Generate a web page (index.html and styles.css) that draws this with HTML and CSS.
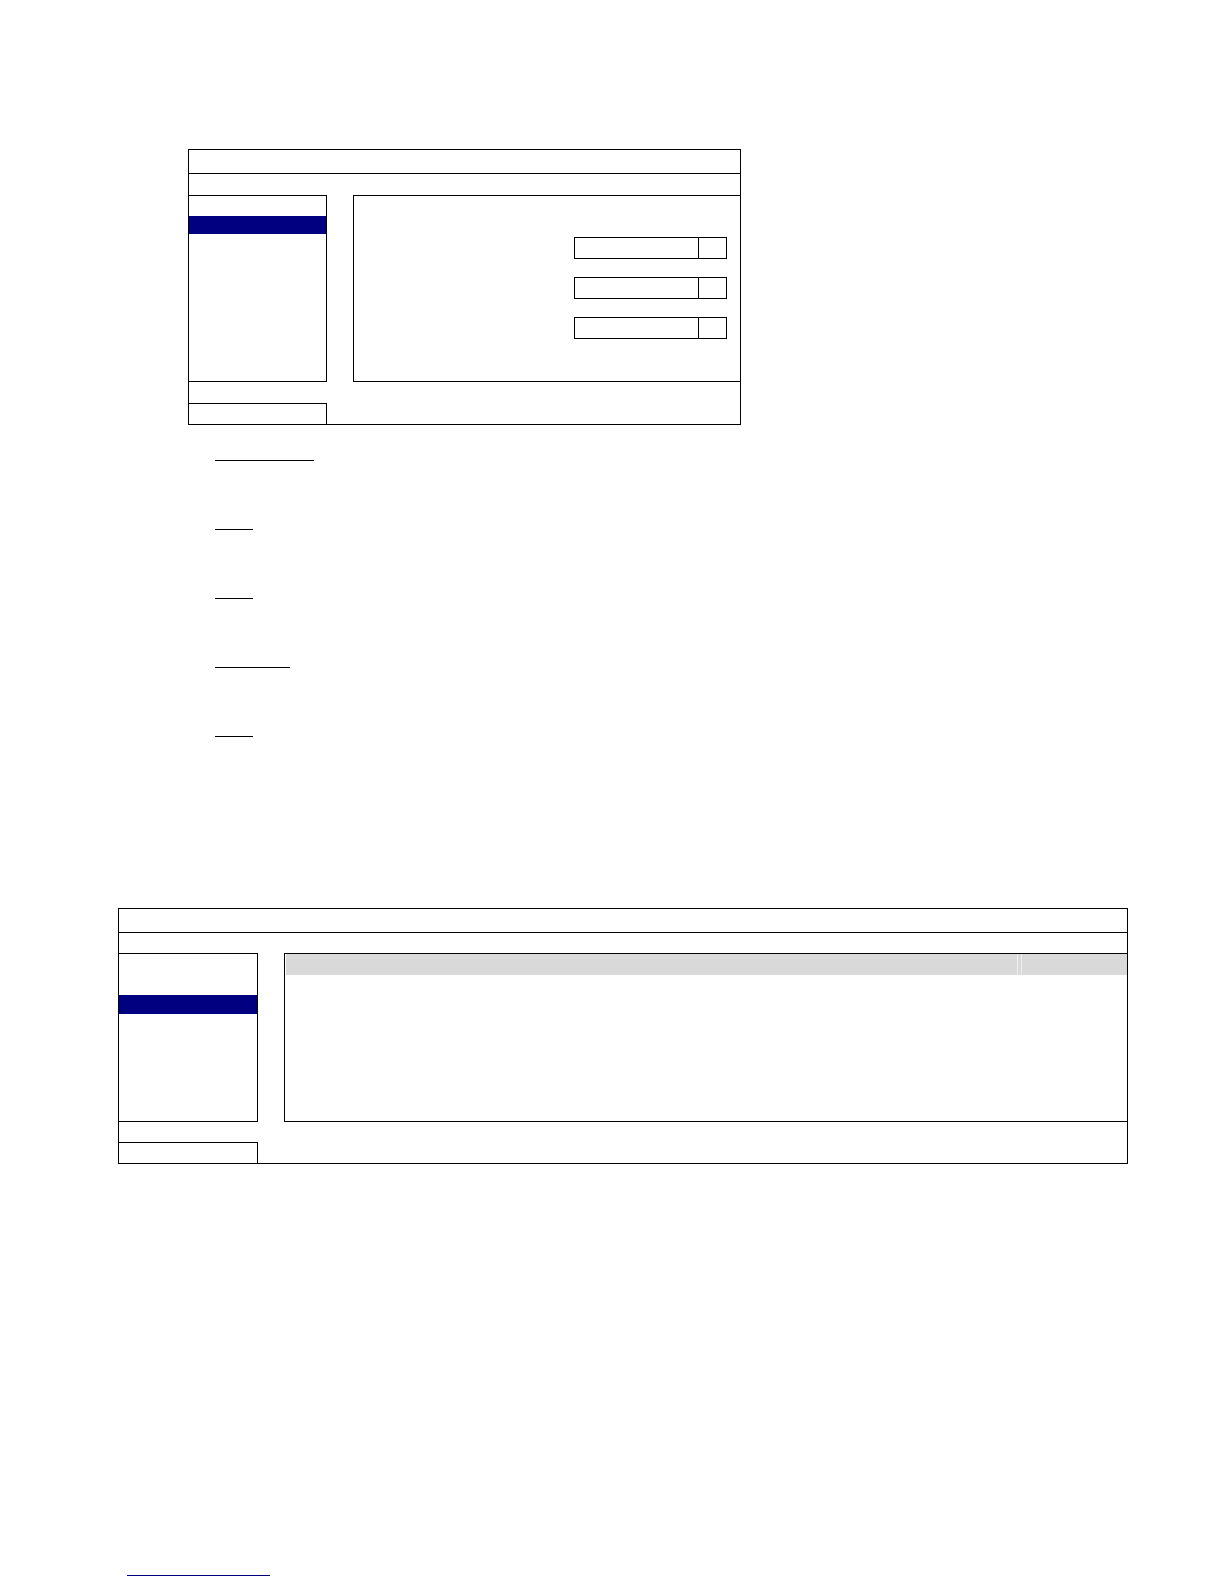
FILE: index.html
```html
<!DOCTYPE html>
<html lang="en">
<head>
<meta charset="utf-8">
<title>Manual page</title>
<link rel="stylesheet" href="styles.css">
</head>
<body>
<main class="page">
  <section class="osd osd-1">
    <div class="osd-title"></div>
    <div class="osd-sub"></div>
    <div class="osd-body">
      <div class="menu menu-1">
        <div class="menu-item"></div>
        <div class="menu-item is-active"></div>
      </div>
      <div class="panel panel-form">
        <div class="select"><div class="select-value"></div><div class="select-btn"></div></div>
        <div class="select"><div class="select-value"></div><div class="select-btn"></div></div>
        <div class="select"><div class="select-value"></div><div class="select-btn"></div></div>
      </div>
    </div>
    <div class="osd-gap"></div>
    <div class="osd-foot"><div class="foot-cell"></div></div>
  </section>

  <ul class="headings">
    <li class="heading heading-lg"></li>
    <li class="heading heading-sm"></li>
    <li class="heading heading-sm"></li>
    <li class="heading heading-md"></li>
    <li class="heading heading-sm"></li>
  </ul>

  <section class="osd osd-2">
    <div class="osd-title"></div>
    <div class="osd-sub"></div>
    <div class="osd-body">
      <div class="menu menu-2">
        <div class="menu-item"></div>
        <div class="menu-item"></div>
        <div class="menu-item is-active"></div>
      </div>
      <div class="panel panel-list">
        <div class="grid-head">
          <div class="col-main"></div>
          <div class="col-sep"></div>
          <div class="col-end"></div>
        </div>
      </div>
    </div>
    <div class="osd-gap"></div>
    <div class="osd-foot"><div class="foot-cell"></div></div>
  </section>

  <div class="footnote-rule"></div>
</main>
</body>
</html>
```

FILE: styles.css
```css
* { box-sizing: border-box; }
html, body { margin: 0; padding: 0; background: #fff; }
body { font-family: "Liberation Sans", Arial, sans-serif; font-size: 12px; color: #000; }

.page {
  width: 1224px;
  height: 1584px;
  padding-top: 149px;
  overflow: hidden;
}

/* OSD window mock-ups */
.osd {
  border: 1px solid #000;
  display: flex;
  flex-direction: column;
}
.osd-1 { margin-left: 188px; width: 553px; }
.osd-2 { margin-left: 118px; width: 1010px; margin-top: 171px; }

.osd-title { height: 24px; border-bottom: 1px solid #000; }
.osd-sub { height: 21px; }
.osd-2 .osd-sub { height: 20px; }

.osd-body { display: flex; gap: 26px; }

.menu {
  width: 139px;
  border-top: 1px solid #000;
  border-right: 1px solid #000;
  border-bottom: 1px solid #000;
}
.menu-1 { width: 138px; height: 187px; }
.menu-2 { height: 169px; }
.menu-item { height: 20px; }
.menu-2 .menu-item { height: 20.5px; }
.menu-item.is-active { background: #000080; height: 18px; }
.menu-2 .menu-item.is-active { height: 19px; }

.panel {
  flex: 1;
  border-top: 1px solid #000;
  border-left: 1px solid #000;
  border-bottom: 1px solid #000;
}

.panel-form {
  display: flex;
  flex-direction: column;
  align-items: flex-end;
  gap: 18px;
  padding: 41px 13px 0 0;
}
.select {
  width: 153px;
  height: 22px;
  border: 1px solid #000;
  display: flex;
}
.select-value { flex: 1; }
.select-btn { width: 28px; border-left: 1px solid #000; }

.grid-head {
  display: flex;
  height: 21px;
  margin-left: 1px;
  background: #d9d9d9;
}
.col-main { width: 731px; }
.col-sep { width: 5px; border-left: 1px solid #efefef; border-right: 1px solid #efefef; }
.col-end { flex: 1; }

.osd-gap { height: 21px; }
.osd-2 .osd-gap { height: 20px; }
.osd-foot { height: 21px; }
.foot-cell { width: 139px; height: 100%; border-top: 1px solid #000; border-right: 1px solid #000; }
.osd-1 .foot-cell { width: 138px; }

/* underlined headings (text not rendered) */
.headings {
  list-style: none;
  margin: 16px 0 0 215px;
  padding: 0;
  display: flex;
  flex-direction: column;
  gap: 49px;
}
.heading { height: 20px; border-bottom: 1px solid #000; }
.heading-lg { width: 99px; }
.heading-md { width: 75px; }
.heading-sm { width: 38px; }

.footnote-rule {
  margin: 411px 0 0 127px;
  width: 143px;
  border-top: 1px solid #000080;
}
```
